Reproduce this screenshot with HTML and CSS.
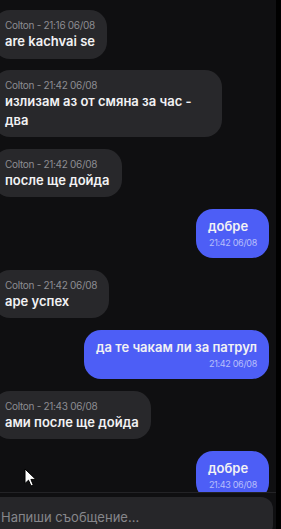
FILE: index.html
```html
<!DOCTYPE html>
<html lang="en">
<head>
    <meta charset="UTF-8">
    <meta name="viewport" content="width=device-width, initial-scale=1.0">
    <title>Chat</title>
    <link rel="stylesheet" href="styles.css">
</head>
<body>
    <div class="chat-panel">
        <div class="messages">
            <div class="message received">
                <div class="meta">Colton - 21:16 06/08</div>
                <div class="text">are kachvai se</div>
            </div>
            <div class="message received">
                <div class="meta">Colton - 21:42 06/08</div>
                <div class="text">излизам аз от смяна за час - два</div>
            </div>
            <div class="message received">
                <div class="meta">Colton - 21:42 06/08</div>
                <div class="text">после ще дойда</div>
            </div>
            <div class="message sent">
                <div class="text">добре</div>
                <div class="time">21:42 06/08</div>
            </div>
            <div class="message received">
                <div class="meta">Colton - 21:42 06/08</div>
                <div class="text">аре успех</div>
            </div>
            <div class="message sent">
                <div class="text">да те чакам ли за патрул</div>
                <div class="time">21:42 06/08</div>
            </div>
            <div class="message received">
                <div class="meta">Colton - 21:43 06/08</div>
                <div class="text">ами после ще дойда</div>
            </div>
            <div class="message sent">
                <div class="text">добре</div>
                <div class="time">21:43 06/08</div>
            </div>
        </div>
        <div class="composer">
            <input class="composer-input" type="text" placeholder="Напиши съобщение...">
        </div>
    </div>

    <svg class="cursor" width="13" height="19" viewBox="0 0 13 19">
        <path d="M1 1 L1 15.5 L4.5 12.2 L7 18 L9.3 17 L6.9 11.4 L11.8 11.4 Z" fill="#fff" stroke="#000" stroke-width="1"/>
    </svg>
</body>
</html>
```

FILE: styles.css
```css
body {
    margin: 0;
    background-color: #000;
    font-family: Inter, "Noto Sans", sans-serif;
    overflow: hidden;
    height: 529px;
}
.chat-panel {
    width: 290px;
    margin-left: -14px;
    height: 529px;
    overflow: hidden;
    background-color: #0f0f11;
    display: flex;
    flex-direction: column;
}
.messages {
    flex-shrink: 0;
    height: 482px;
    overflow: hidden;
    padding: 10px 7px 0;
    display: flex;
    flex-direction: column;
    align-items: flex-start;
    gap: 11.5px;
    border-bottom: 1px solid #232326;
}
.message {
    flex-shrink: 0;
    box-sizing: border-box;
    max-width: 229px;
    padding: 8px 12px;
    border-radius: 17px;
}
.message.received {
    background-color: #28282b;
}
.message.sent {
    align-self: flex-end;
    background-color: #4d5ef6;
    min-width: 73px;
}
.meta {
    font-size: 10px;
    line-height: 14px;
    color: #8d8d92;
    letter-spacing: -0.3px;
}
.text {
    font-size: 13px;
    line-height: 18.5px;
    font-weight: 600;
    color: #f2f2f4;
}
.time {
    font-size: 9px;
    line-height: 14px;
    color: rgba(255, 255, 255, 0.6);
    text-align: right;
    letter-spacing: -0.3px;
    margin-top: 1px;
}
.composer {
    flex-shrink: 0;
    padding: 4px 3px 0;
}
.composer-input {
    width: 100%;
    box-sizing: border-box;
    height: 40px;
    border: none;
    outline: none;
    border-radius: 12px;
    background-color: #262629;
    padding: 0 12px;
    font-family: Inter, "Noto Sans", sans-serif;
    font-size: 13px;
    color: #f2f2f4;
}
.composer-input::placeholder {
    color: #86868b;
}
.cursor {
    position: absolute;
    left: 24px;
    top: 468px;
}
```
